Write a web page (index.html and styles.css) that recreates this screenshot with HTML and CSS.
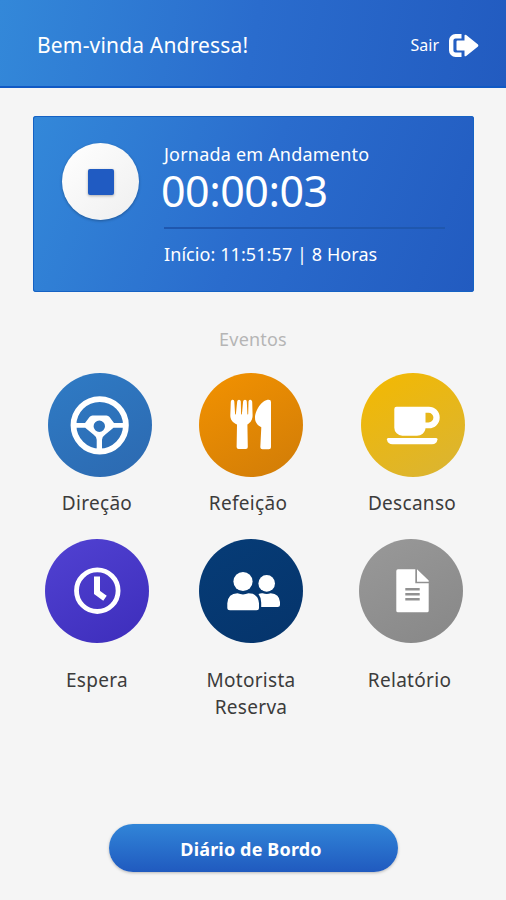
FILE: index.html
```html
<!DOCTYPE html>
<html lang="pt-BR">
<head>
  <meta charset="UTF-8" />
  <meta name="viewport" content="width=device-width, initial-scale=1.0"/>
  <title>Jornada</title>
  <link rel="stylesheet" href="styles.css">
</head>
<body>

  <header class="topbar">
    <h1 class="welcome">Bem-vinda Andressa!</h1>
    <a class="logout" href="#">
      <span>Sair</span>
      <svg width="30" height="23" viewBox="0 0 30 23">
        <path d="M12.500 2.200H6.500a4.300 4.300 0 0 0-4.300 4.300v10a4.300 4.300 0 0 0 4.300 4.300h6" fill="none" stroke="#fff" stroke-width="4.400"/>
        <path d="M8.500 6.500h7V1.500q.3-1.500 1.700-.4L29 10.600q.8.900 0 1.800l-11.800 9.500q-1.400 1.100-1.700-.4v-5h-7q-1 0-1-1v-8q0-1 1-1z" fill="#fff"/>
      </svg>
    </a>
  </header>

  <main>
    <section class="journey">
      <button class="stop-btn" aria-label="Parar"><span class="stop-icon"></span></button>
      <div class="journey-info">
        <div class="journey-status">Jornada em Andamento</div>
        <div class="timer">00:00:03</div>
        <div class="journey-start">Início: 11:51:57 | 8 Horas</div>
      </div>
    </section>

    <h2 class="events-title">Eventos</h2>

    <div class="events">
      <a class="event direcao" href="#">
        <svg class="event-icon" viewBox="0 0 104 104">
          <circle cx="51.700" cy="52.300" r="26.200" fill="none" stroke="#fff" stroke-width="5.800"/>
          <path fill="#fff" fill-rule="evenodd" d="M26 50h11l4.500-6q1.200-1.500 3-1.500h14q1.800 0 3 1.500l4.500 6h12v4.700H65.500l-8.500 7q-3 2-3 5V79h-5.300V66.700q0-3-3-5l-8.500-7H26zM51.300 47.600a5.700 5.700 0 1 0 0 11.400 5.700 5.700 0 0 0 0-11.400z"/>
        </svg>
        <span class="event-label">Direção</span>
      </a>
      <a class="event refeicao" href="#">
        <svg class="event-icon" viewBox="0 0 104 104">
          <path fill="#fff" d="M33.200 26.800q1.900-.5 2.100 1.600l.8 12.500q.2 1 .8 0l1.300-12.500q.2-1.700 1.800-1.700t1.800 1.700l.3 12.500q.4 1 .8 0l1.200-12.500q.2-1.700 1.900-1.700t1.800 1.700l.6 12.500q.4 1 .8 0l.3-12.500q.3-2.100 2.100-1.600 1.400.3 1.600 2l.4 13.500c0 4.600-2 7.300-5.200 9.100l.4 22.500q0 2-2 2h-7.200q-2 0-2-2L38 51.400c-4.400-1.800-6.700-4.500-6.700-9.100l.5-13.500q.1-1.700 1.400-2z"/>
          <path fill="#fff" d="M69.800 26.700q2.200 0 2.200 2.200v45.300q0 2-2.200 2h-6.300q-2.200 0-2.200-2l1-20c-3.200-1.400-6.300-4.600-6.300-9.200 0-7.500 6.700-18.300 13.800-18.300z"/>
        </svg>
        <span class="event-label">Refeição</span>
      </a>
      <a class="event descanso" href="#">
        <svg class="event-icon" viewBox="0 0 104 104">
          <path fill="#fff" fill-rule="evenodd" d="M35.500 33.700h32.400a10.800 10.800 0 0 1 0 21.600h-3.400c-.5 4.600-4.200 7.400-8.500 7.400H41.300a8 8 0 0 1-8-8V35.900q0-2.200 2.200-2.200zM64.500 39.700v9.800h3a4.900 4.900 0 0 0 0-9.800z"/>
          <path fill="#fff" d="M27.200 65h47.900q1.600 0 1.400 1.500-.8 4.800-5.500 4.800H31.500q-4.700 0-5.600-4.800-.2-1.500 1.300-1.500z"/>
        </svg>
        <span class="event-label">Descanso</span>
      </a>
    </div>

    <div class="events">
      <a class="event espera" href="#">
        <svg class="event-icon" viewBox="0 0 104 104">
          <circle cx="52.300" cy="51.700" r="20.800" fill="none" stroke="#fff" stroke-width="4.800"/>
          <path d="M52 37.500V53.500L60 59.200" fill="none" stroke="#fff" stroke-width="6"/>
        </svg>
        <span class="event-label">Espera</span>
      </a>
      <a class="event motorista" href="#">
        <svg class="event-icon" viewBox="0 0 104 104" fill="#fff">
          <circle cx="44" cy="42.500" r="9.600"/>
          <circle cx="67.700" cy="44.400" r="8.300"/>
          <path d="M38.500 54.300q5.500 2.200 11 0 9.800 0 10.500 10v4.500q0 2.500-2.500 2.500H31q-2.700 0-2.700-2.500v-4.500q.8-10 10.200-10z"/>
          <path d="M59.500 55q2-.9 4.200-.7 4 1.600 8 0 8.700.8 9.300 8.700v2.600q0 2.500-2.500 2.500H62.200v-4.400q-.2-5.500-2.700-8.700z"/>
        </svg>
        <span class="event-label">Motorista<br>Reserva</span>
      </a>
      <a class="event relatorio" href="#">
        <svg class="event-icon" viewBox="0 0 104 104">
          <path fill="#fff" d="M39 30.300h17.300V44.200h13.400v27.500q0 1.600-1.600 1.600H39q-1.700 0-1.700-1.600V32q0-1.700 1.700-1.700zM58 30.300L69.700 41.500v1.300H58z"/>
          <path d="M46.300 50.300h14.400M46.300 55.300h14.400M46.300 60.300h14.400" stroke="#919191" stroke-width="2.400"/>
        </svg>
        <span class="event-label">Relatório</span>
      </a>
    </div>
  </main>

  <button class="logbook-btn">Diário de Bordo</button>

</body>
</html>
```
FILE: styles.css
```css
* {
  box-sizing: border-box;
}

body {
  margin: 0;
  height: 900px;
  display: flex;
  flex-direction: column;
  background: #f5f5f5;
  font-family: "Noto Sans", sans-serif;
  overflow: hidden;
}

a {
  color: inherit;
  text-decoration: none;
}

.topbar {
  height: 88px;
  padding: 4px 27px 0 37px;
  display: flex;
  align-items: center;
  justify-content: space-between;
  color: #fff;
  background: linear-gradient(100deg, #3388d9, #2a6ccd 50%, #225bc0);
  border-bottom: 2px solid #1059c4;
}

.welcome {
  margin: 0;
  font-size: 21px;
  font-weight: 400;
  letter-spacing: 0.17px;
}

.logout {
  display: flex;
  align-items: center;
  gap: 10px;
  font-size: 16px;
}

.journey {
  margin: 28px 32px 0 33px;
  height: 176px;
  padding: 26px 29px 0;
  display: flex;
  gap: 25px;
  color: #fff;
  background: linear-gradient(112deg, #3388d9, #2a6ccd 50%, #225bc0);
  border-radius: 3px;
  box-shadow: inset 0 0 0 1px #1562c4;
}

.stop-btn {
  width: 77px;
  height: 77px;
  margin-top: 1px;
  padding: 0;
  flex: none;
  display: flex;
  align-items: center;
  justify-content: center;
  border: none;
  border-radius: 50%;
  background: linear-gradient(135deg, #fff, #efefef);
  box-shadow: 0 1px 3px rgba(0, 0, 0, 0.3);
}

.stop-icon {
  width: 26px;
  height: 26px;
  border-radius: 2px;
  background: #205bc2;
  box-shadow: 0 1px 3px rgba(0, 0, 0, 0.3);
}

.journey-info {
  flex: 1;
}

.journey-status {
  font-size: 18px;
  line-height: 24px;
  letter-spacing: 0.2px;
}

.timer {
  margin-left: -3px;
  height: 61px;
  font-size: 43px;
  line-height: 49px;
  letter-spacing: -0.5px;
}

.journey-start {
  border-top: 2px solid #1f57ae;
  padding-top: 13px;
  font-size: 18px;
  line-height: 25px;
  letter-spacing: 0.08px;
}

.events-title {
  margin: 34px 0 21px;
  text-align: center;
  font-size: 18px;
  line-height: 26px;
  font-weight: 400;
  letter-spacing: 0.2px;
  color: #b5b5b5;
}

.events {
  display: flex;
  height: 166px;
}

.event {
  width: 104px;
  display: flex;
  flex-direction: column;
  align-items: center;
  color: #3c3c3c;
}

.event-icon {
  width: 104px;
  height: 104px;
  flex: none;
  border-radius: 50%;
}

.event-label {
  margin-top: 13px;
  font-size: 19px;
  line-height: 27px;
  letter-spacing: 0.3px;
  text-align: center;
  white-space: nowrap;
}

.direcao { margin-left: 48px; }
.refeicao { margin-left: 47px; }
.descanso { margin-left: 58px; }
.espera { margin-left: 45px; }
.motorista { margin-left: 50px; }
.relatorio { margin-left: 56px; }

.direcao .event-icon { background: linear-gradient(150deg, #2f7bc5, #2c69b0); }
.refeicao .event-icon { background: linear-gradient(150deg, #f39200, #d07c08); }
.descanso .event-icon { background: linear-gradient(150deg, #f4b900, #d9b435); }
.espera .event-icon { background: linear-gradient(150deg, #5142d2, #3d2dbb); }
.motorista .event-icon { background: linear-gradient(150deg, #063c77, #05346b); }
.relatorio .event-icon { background: linear-gradient(150deg, #999, #878787); }

.direcao .event-label,
.refeicao .event-label {
  margin-right: 6px;
}

.descanso .event-label {
  margin-right: 2px;
}

.espera .event-label,
.motorista .event-label,
.relatorio .event-label {
  margin-top: 24px;
}

.relatorio .event-label {
  margin-right: 3px;
}

.logbook-btn {
  width: 289px;
  height: 48px;
  margin: auto auto 28px 109px;
  padding: 1px 5px 0 0;
  border: none;
  border-radius: 24px;
  font-family: inherit;
  font-size: 18px;
  font-weight: 700;
  letter-spacing: 0.15px;
  color: #fff;
  background: linear-gradient(#3185d8, #205abf);
  box-shadow: 0 1px 3px rgba(0, 0, 0, 0.25);
}
```
